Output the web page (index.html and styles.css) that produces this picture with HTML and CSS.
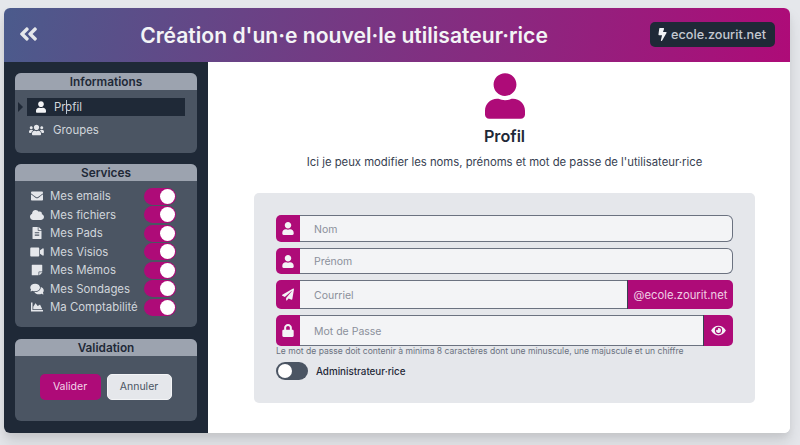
FILE: index.html
```html
<!DOCTYPE html>
<html lang="fr">

<head>
    <meta charset="UTF-8">
    <meta name="viewport" content="width=device-width, initial-scale=1.0">
    <title>Création d'un·e nouvel·le utilisateur·rice</title>
    <link rel="stylesheet" href="styles.css">
</head>

<body>
    <svg class="sprite" xmlns="http://www.w3.org/2000/svg">
        <symbol id="i-back" viewBox="0 0 448 512"><path d="M223.7 239l136-136c9.4-9.4 24.6-9.4 33.9 0l22.6 22.6c9.4 9.4 9.4 24.6 0 33.9L319.9 256l96.4 96.4c9.4 9.4 9.4 24.6 0 33.9L393.7 409c-9.4 9.4-24.6 9.4-33.9 0l-136-136c-9.5-9.4-9.5-24.6-.1-34zm-192 34l136 136c9.4 9.4 24.6 9.4 33.9 0l22.6-22.6c9.4-9.4 9.4-24.6 0-33.9L127.9 256l96.4-96.4c9.4-9.4 9.4-24.6 0-33.9L201.7 103c-9.4-9.4-24.6-9.4-33.9 0l-136 136c-9.5 9.4-9.5 24.6-.1 34z"/></symbol>
        <symbol id="i-bolt" viewBox="0 0 320 512"><path d="M296 160H180.6l42.6-129.8C227.2 15 215.7 0 200 0H56C44 0 33.8 8.9 32.2 20.8l-32 240C-1.7 275.2 9.5 288 24 288h118.7L96.6 482.5c-3.6 15.2 8 29.5 23.3 29.5 8.4 0 16.4-4.4 20.8-12l176-304c9.3-15.9-2.2-36-20.7-36z"/></symbol>
        <symbol id="i-user" viewBox="0 0 448 512"><path d="M224 256c70.7 0 128-57.3 128-128S294.7 0 224 0 96 57.3 96 128s57.3 128 128 128zm89.6 32h-16.7c-22.2 10.2-46.9 16-72.9 16s-50.6-5.8-72.9-16h-16.7C60.2 288 0 348.2 0 422.4V464c0 26.5 21.5 48 48 48h352c26.5 0 48-21.5 48-48v-41.6c0-74.2-60.2-134.4-134.4-134.4z"/></symbol>
        <symbol id="i-users" viewBox="0 0 640 512"><path d="M96 224c35.3 0 64-28.7 64-64s-28.7-64-64-64-64 28.7-64 64 28.7 64 64 64zm448 0c35.3 0 64-28.7 64-64s-28.7-64-64-64-64 28.7-64 64 28.7 64 64 64zm32 32h-64c-17.6 0-33.5 7.1-45.1 18.6 40.3 22.1 68.9 62 75.1 109.4h66c17.7 0 32-14.3 32-32v-32c0-35.3-28.7-64-64-64zm-256 0c61.9 0 112-50.1 112-112S381.9 32 320 32 208 82.1 208 144s50.1 112 112 112zm76.8 32h-8.3c-20.8 10-43.9 16-68.5 16s-47.6-6-68.5-16h-8.3C179.6 288 128 339.6 128 403.2V432c0 26.5 21.5 48 48 48h288c26.5 0 48-21.5 48-48v-28.8c0-63.6-51.6-115.2-115.2-115.2zm-223.7-13.4C161.5 263.1 145.6 256 128 256H64c-35.3 0-64 28.7-64 64v32c0 17.7 14.3 32 32 32h65.9c6.3-47.4 34.9-87.3 75.2-109.4z"/></symbol>
        <symbol id="i-mail" viewBox="0 0 512 512"><path d="M502.3 190.8c3.9-3.1 9.7-.2 9.7 4.7V400c0 26.5-21.5 48-48 48H48c-26.5 0-48-21.5-48-48V195.6c0-5 5.7-7.8 9.7-4.7 22.4 17.4 52.1 39.5 154.1 113.6 21.1 15.4 56.7 47.8 92.2 47.6 35.7.3 72-32.8 92.3-47.6 102-74.1 131.6-96.3 154-113.7zM256 320c23.2.4 56.6-29.2 73.4-41.4 132.7-96.3 142.8-104.7 173.4-128.7 5.8-4.5 9.2-11.5 9.2-18.9v-19c0-26.5-21.5-48-48-48H48C21.5 64 0 85.5 0 112v19c0 7.4 3.4 14.3 9.2 18.9 30.6 23.9 40.7 32.4 173.4 128.7 16.8 12.2 50.2 41.8 73.4 41.4z"/></symbol>
        <symbol id="i-cloud" viewBox="0 0 640 512"><path d="M537.6 226.6c4.1-10.7 6.4-22.4 6.4-34.6 0-53-43-96-96-96-19.7 0-38.1 6-53.3 16.2C367 64.2 315.3 32 256 32c-88.4 0-160 71.6-160 160 0 2.7.1 5.4.2 8.1C40.2 219.8 0 273.2 0 336c0 79.5 64.5 144 144 144h368c70.7 0 128-57.3 128-128 0-61.9-44-113.6-102.4-125.4z"/></symbol>
        <symbol id="i-file" viewBox="0 0 384 512"><path d="M224 136V0H24C10.7 0 0 10.7 0 24v464c0 13.3 10.7 24 24 24h336c13.3 0 24-10.7 24-24V160H248c-13.2 0-24-10.8-24-24zm64 236c0 6.6-5.4 12-12 12H108c-6.6 0-12-5.4-12-12v-8c0-6.6 5.4-12 12-12h168c6.6 0 12 5.4 12 12v8zm0-64c0 6.6-5.4 12-12 12H108c-6.6 0-12-5.4-12-12v-8c0-6.6 5.4-12 12-12h168c6.6 0 12 5.4 12 12v8zm0-72v8c0 6.6-5.4 12-12 12H108c-6.6 0-12-5.4-12-12v-8c0-6.6 5.4-12 12-12h168c6.6 0 12 5.4 12 12zm96-114.1v6.1H256V0h6.1c6.4 0 12.5 2.5 17 7l97.9 98c4.5 4.5 7 10.6 7 16.9z"/></symbol>
        <symbol id="i-video" viewBox="0 0 576 512"><path d="M336.2 64H47.8C21.4 64 0 85.4 0 111.8v288.4C0 426.6 21.4 448 47.8 448h288.4c26.4 0 47.8-21.4 47.8-47.8V111.8c0-26.4-21.4-47.8-47.8-47.8zm189.4 37.7L416 177.3v157.4l109.6 75.5c21.2 14.6 50.4-.3 50.4-25.8V127.5c0-25.4-29.1-40.4-50.4-25.8z"/></symbol>
        <symbol id="i-note" viewBox="0 0 448 512"><path d="M312 320h136V56c0-13.3-10.7-24-24-24H24C10.7 32 0 42.7 0 56v400c0 13.3 10.7 24 24 24h264V344c0-13.2 10.8-24 24-24zm129 55l-98 98c-4.5 4.5-10.6 7-17 7h-6V352h128v6.1c0 6.3-2.5 12.4-7 16.9z"/></symbol>
        <symbol id="i-comments" viewBox="0 0 576 512"><path d="M416 192c0-88.4-93.1-160-208-160S0 103.6 0 192c0 34.3 14.1 65.9 38 92-13.4 30.2-35.5 54.2-35.8 54.5-2.2 2.3-2.8 5.7-1.5 8.7S4.8 352 8 352c36.6 0 66.9-12.3 88.7-25 32.2 15.7 70.3 25 111.3 25 114.9 0 208-71.6 208-160zm122 220c23.9-26 38-57.7 38-92 0-66.9-53.5-124.2-129.3-148.1.9 6.6 1.3 13.3 1.3 20.1 0 105.9-107.7 192-240 192-10.8 0-21.3-.8-31.7-1.9C207.8 439.6 281.8 480 368 480c41 0 79.1-9.2 111.3-25 21.8 12.7 52.1 25 88.7 25 3.2 0 6.1-1.9 7.3-4.8 1.3-2.9.7-6.3-1.5-8.7-.3-.3-22.4-24.2-35.8-54.5z"/></symbol>
        <symbol id="i-chart" viewBox="0 0 512 512"><path d="M500 384c6.6 0 12 5.4 12 12v40c0 6.6-5.4 12-12 12H12c-6.6 0-12-5.4-12-12V76c0-6.6 5.4-12 12-12h40c6.6 0 12 5.4 12 12v308h436zM372.7 159.5L288 216l-85.3-113.7c-5.1-6.8-15.5-6.3-19.9 1L96 248v104h384l-89.9-187.8c-3.2-6.5-11.4-8.7-17.4-4.7z"/></symbol>
        <symbol id="i-plane" viewBox="0 0 512 512"><path d="M476 3.2L12.5 270.6c-18.1 10.4-15.8 35.6 2.2 43.2L121 358.4l287.3-253.2c5.5-4.9 13.3 2.6 8.6 8.3L176 407v80.5c0 23.6 28.5 32.9 42.5 15.8L282 426l124.6 52.2c14.2 6 30.4-2.9 33-18.2l72-432C515 7.8 493.3-6.8 476 3.2z"/></symbol>
        <symbol id="i-lock" viewBox="0 0 448 512"><path d="M400 224h-24v-72C376 68.2 307.8 0 224 0S72 68.2 72 152v72H48c-26.5 0-48 21.5-48 48v192c0 26.5 21.5 48 48 48h352c26.5 0 48-21.5 48-48V272c0-26.5-21.5-48-48-48zm-104 0H152v-72c0-39.7 32.3-72 72-72s72 32.3 72 72v72z"/></symbol>
        <symbol id="i-eye" viewBox="0 0 576 512"><path d="M572.52 241.4C518.29 135.59 410.93 64 288 64S57.68 135.64 3.48 241.41a32.35 32.35 0 0 0 0 29.19C57.71 376.41 165.07 448 288 448s230.32-71.64 284.52-177.41a32.35 32.35 0 0 0 0-29.19zM288 400a144 144 0 1 1 144-144 143.93 143.93 0 0 1-144 144zm0-240a95.31 95.31 0 0 0-25.31 3.79 47.85 47.85 0 0 1-66.9 66.9A95.78 95.78 0 1 0 288 160z"/></symbol>
    </svg>

    <div class="card">
        <header class="topbar">
            <svg class="back"><use href="#i-back"/></svg>
            <h1>Création d'un·e nouvel·le utilisateur·rice</h1>
            <div class="domain"><svg class="bolt"><use href="#i-bolt"/></svg>ecole.zourit.net</div>
        </header>

        <div class="content">
            <aside class="sidebar">
                <section class="panel panel-info">
                    <h2>Informations</h2>
                    <div class="nav-item active">
                        <span class="arrow"></span>
                        <svg class="nav-icon"><use href="#i-user"/></svg>
                        <span>Profil</span>
                        <span class="caret"></span>
                    </div>
                    <div class="nav-item">
                        <svg class="nav-icon nav-icon-wide"><use href="#i-users"/></svg>
                        <span>Groupes</span>
                    </div>
                </section>

                <section class="panel panel-services">
                    <h2>Services</h2>
                    <ul class="services">
                        <li><svg class="svc-icon"><use href="#i-mail"/></svg><span>Mes emails</span><i class="switch on"></i></li>
                        <li><svg class="svc-icon"><use href="#i-cloud"/></svg><span>Mes fichiers</span><i class="switch on"></i></li>
                        <li><svg class="svc-icon"><use href="#i-file"/></svg><span>Mes Pads</span><i class="switch on"></i></li>
                        <li><svg class="svc-icon"><use href="#i-video"/></svg><span>Mes Visios</span><i class="switch on"></i></li>
                        <li><svg class="svc-icon"><use href="#i-note"/></svg><span>Mes Mémos</span><i class="switch on"></i></li>
                        <li><svg class="svc-icon"><use href="#i-comments"/></svg><span>Mes Sondages</span><i class="switch on"></i></li>
                        <li><svg class="svc-icon"><use href="#i-chart"/></svg><span>Ma Comptabilité</span><i class="switch on"></i></li>
                    </ul>
                </section>

                <section class="panel panel-valid">
                    <h2>Validation</h2>
                    <div class="actions">
                        <button class="btn btn-primary">Valider</button>
                        <button class="btn btn-light">Annuler</button>
                    </div>
                </section>
            </aside>

            <main class="main">
                <svg class="hero-icon"><use href="#i-user"/></svg>
                <h2 class="hero-title">Profil</h2>
                <p class="hero-text">Ici je peux modifier les noms, prénoms et mot de passe de l'utilisateur·rice</p>

                <form class="form">
                    <div class="field field-name">
                        <span class="addon"><svg><use href="#i-user"/></svg></span>
                        <input type="text" placeholder="Nom">
                    </div>
                    <div class="field field-first">
                        <span class="addon"><svg><use href="#i-user"/></svg></span>
                        <input type="text" placeholder="Prénom">
                    </div>
                    <div class="field field-mail">
                        <span class="addon"><svg><use href="#i-plane"/></svg></span>
                        <input class="has-suffix" type="text" placeholder="Courriel">
                        <span class="suffix">@ecole.zourit.net</span>
                    </div>
                    <div class="field field-pass">
                        <span class="addon"><svg><use href="#i-lock"/></svg></span>
                        <input class="has-suffix" type="text" placeholder="Mot de Passe">
                        <span class="suffix suffix-eye"><svg><use href="#i-eye"/></svg></span>
                    </div>
                    <p class="hint">Le mot de passe doit contenir à minima 8 caractères dont une minuscule, une majuscule et un chiffre</p>
                    <div class="admin">
                        <i class="switch off"></i>
                        <span>Administrateur·rice</span>
                    </div>
                </form>
            </main>
        </div>
    </div>
</body>

</html>
```

FILE: styles.css
```css
* {
    box-sizing: border-box;
    margin: 0;
    padding: 0;
}

body {
    font-family: Inter, 'Noto Sans', sans-serif;
    background-color: #e5e7eb;
    height: 445px;
    padding: 8px 10px 12px 4px;
    overflow: hidden;
    color: #1f2937;
}

.sprite {
    display: none;
}

svg {
    fill: currentColor;
    display: block;
    flex-shrink: 0;
}

.card {
    height: 425px;
    display: flex;
    flex-direction: column;
    background: #fff;
    border-radius: 6px;
    overflow: hidden;
    box-shadow: 0 10px 15px rgba(0, 0, 0, 0.1), 0 4px 6px rgba(0, 0, 0, 0.05);
}

/* top bar */
.topbar {
    height: 54px;
    flex-shrink: 0;
    display: flex;
    align-items: center;
    justify-content: space-between;
    padding: 0 15px;
    color: #fff;
    background: linear-gradient(100deg, #4b5b8c 0%, #ae0b78 100%);
}

.back {
    width: 19px;
    height: 22px;
    color: #e5e7eb;
    margin-top: -3px;
}

.topbar h1 {
    font-size: 21.1px;
    font-weight: 600;
    color: #f3f4f6;
}

.domain {
    display: flex;
    align-items: center;
    gap: 4px;
    width: 125px;
    height: 25px;
    padding-left: 8px;
    margin-top: -2px;
    background: #1f2937;
    border-radius: 5px;
    font-size: 12.7px;
    font-weight: 500;
    color: #c4c9d1;
}

.bolt {
    width: 9px;
    height: 13px;
    color: #f3f4f6;
}

.content {
    flex: 1;
    display: flex;
    min-height: 0;
}

/* sidebar */
.sidebar {
    width: 204px;
    flex-shrink: 0;
    background: #1f2937;
    padding: 11px;
    display: flex;
    flex-direction: column;
}

.panel {
    background: #4b5563;
    border-radius: 6px;
    overflow: hidden;
    color: #d1d5db;
    font-size: 11.4px;
}

.panel h2 {
    height: 17px;
    line-height: 18px;
    background: #9ca3af;
    color: #1f2937;
    font-size: 11.8px;
    font-weight: 600;
    text-align: center;
}

.panel-info {
    height: 80px;
    margin-bottom: 11px;
}

.panel-services {
    height: 163px;
    margin-bottom: 12px;
}

.panel-valid {
    height: 82px;
}

.nav-item {
    position: relative;
    display: flex;
    align-items: center;
    height: 18px;
    margin: 8px 12px 0 12px;
    padding-left: 2px;
    gap: 9px;
}

.nav-item.active {
    background: #1f2937;
    padding-left: 9px;
    gap: 8px;
}

.nav-item + .nav-item {
    margin-top: 5px;
}

.arrow {
    position: absolute;
    left: -9px;
    top: 4px;
    border-left: 5px solid #1f2937;
    border-top: 5px solid transparent;
    border-bottom: 5px solid transparent;
}

.caret {
    position: absolute;
    left: 39px;
    top: 2px;
    width: 1px;
    height: 14px;
    background: #b9c6d6;
}

.nav-icon {
    width: 10px;
    height: 12px;
    color: #f3f4f6;
}

.nav-icon-wide {
    width: 15px;
    height: 12px;
    color: #e5e7eb;
}

.services {
    list-style: none;
    padding: 6px 12px 0 15px;
}

.services li {
    display: flex;
    align-items: center;
    height: 18.5px;
}

.svc-icon {
    width: 14px;
    height: 12px;
    margin-right: 6px;
    color: #e5e7eb;
}

.services .switch {
    margin-left: auto;
    margin-right: 9px;
}

.switch {
    display: block;
    position: relative;
    width: 32px;
    height: 17px;
    border-radius: 9px;
    flex-shrink: 0;
}

.switch::after {
    content: '';
    position: absolute;
    top: 1px;
    width: 15px;
    height: 15px;
    border-radius: 50%;
    background: #fff;
}

.switch.on {
    background: #ae0b78;
}

.switch.on::after {
    right: 1px;
}

.switch.off {
    background: #4b5563;
    height: 18px;
}

.switch.off::after {
    left: 2px;
    top: 2px;
    width: 14px;
    height: 14px;
}

.actions {
    display: flex;
    align-items: center;
    justify-content: center;
    gap: 6px;
    height: 61px;
    padding: 0 1px 0 0;
}

.btn {
    height: 26px;
    border: none;
    border-radius: 5px;
    font-family: inherit;
    font-size: 10.5px;
    cursor: pointer;
}

.btn-primary {
    width: 61px;
    background: #ae0b78;
    color: #f3d6e8;
}

.btn-light {
    width: 65px;
    background: #e5e7eb;
    color: #4b5563;
    border: 1px solid #f3f4f6;
}

/* main */
.main {
    flex: 1;
    padding: 11px 35px 0 46px;
    display: flex;
    flex-direction: column;
    align-items: center;
    background: #fff;
}

.hero-icon {
    width: 40px;
    height: 46px;
    color: #ae0b78;
}

.hero-title {
    margin-top: 7px;
    font-size: 16.2px;
    font-weight: 600;
    line-height: 20px;
    color: #1f2937;
}

.hero-text {
    margin-top: 8px;
    font-size: 11.3px;
    line-height: 16px;
    color: #374151;
}

.form {
    width: 100%;
    height: 210px;
    margin-top: 23px;
    padding: 22px;
    background: #e5e7eb;
    border-radius: 5px;
}

.field {
    display: flex;
    margin-bottom: 6px;
}

.field-name {
    height: 27px;
}

.field-first {
    height: 26px;
}

.field-mail {
    height: 29px;
}

.field-pass {
    height: 31px;
    margin-bottom: 0;
}

.addon {
    width: 24px;
    flex-shrink: 0;
    display: flex;
    align-items: center;
    justify-content: center;
    background: #ae0b78;
    color: #f3f4f6;
    border-radius: 5px 0 0 5px;
}

.addon svg {
    width: 12px;
    height: 13px;
}

.field input {
    flex: 1;
    min-width: 0;
    border: 1px solid #6b7280;
    border-left: none;
    border-radius: 0 6px 6px 0;
    background: #f3f4f6;
    padding: 1px 0 0 14px;
    font-family: inherit;
    font-size: 10.5px;
    color: #1f2937;
}

.field input::placeholder {
    color: #8b909b;
}

.field input.has-suffix {
    border-radius: 0;
    border-right: none;
}

.suffix {
    flex-shrink: 0;
    width: 106px;
    display: flex;
    align-items: center;
    justify-content: center;
    background: #ae0b78;
    color: #f0cfe4;
    border-left: 1px solid #374151;
    border-radius: 0 5px 5px 0;
    font-size: 11.3px;
}

.suffix-eye {
    width: 30px;
    color: #f3f4f6;
}

.suffix-eye svg {
    width: 15px;
    height: 13px;
}

.hint {
    font-size: 8.55px;
    line-height: 10px;
    color: #6b7280;
}

.admin {
    display: flex;
    align-items: center;
    gap: 8px;
    margin-top: 6px;
    font-size: 9.8px;
    font-weight: 500;
    color: #1f2937;
}
```
